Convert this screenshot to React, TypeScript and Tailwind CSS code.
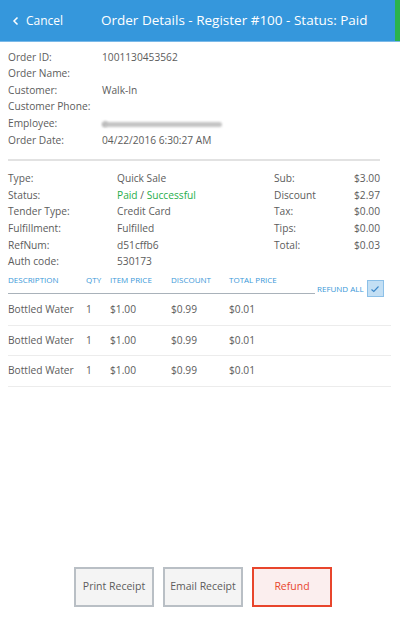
import React from "react";

const infoRows: [string, string][] = [
  ["Order ID:", "1001130453562"],
  ["Order Name:", ""],
  ["Customer:", "Walk-In"],
  ["Customer Phone:", ""],
  ["Employee:", "__BLUR__"],
  ["Order Date:", "04/22/2016 6:30:27 AM"],
];

const leftRows: [string, React.ReactNode][] = [
  ["Type:", "Quick Sale"],
  ["Status:", <span className="text-[#1fae4b]">Paid <span className="text-[#5c5c5c]">/</span> Successful</span>],
  ["Tender Type:", "Credit Card"],
  ["Fulfillment:", "Fulfilled"],
  ["RefNum:", "d51cffb6"],
  ["Auth code:", "530173"],
];

const rightRows: [string, string][] = [
  ["Sub:", "$3.00"],
  ["Discount", "$2.97"],
  ["Tax:", "$0.00"],
  ["Tips:", "$0.00"],
  ["Total:", "$0.03"],
];

export default function App() {
  return (
    <div
      className="w-[400px] min-h-[640px] bg-white flex flex-col text-[#5c5c5c] text-[10.2px]"
      style={{ fontFamily: '"Open Sans", "Noto Sans", sans-serif' }}
    >
      <div className="h-[42px] bg-[#3597dc] flex items-stretch border-b border-[#7ab9e8] shrink-0">
        <div className="flex items-center pl-[12px] w-[101px] text-white text-[12px]">
          <svg width="8" height="10" viewBox="0 0 8 10" className="mr-[6px]">
            <path d="M5.5 1.5 L2 5 L5.5 8.5" fill="none" stroke="white" strokeWidth="1.5" />
          </svg>
          <span>Cancel</span>
        </div>
        <div className="flex-1 flex items-center text-white text-[13.5px]">
          Order Details - Register #100 - Status: Paid
        </div>
        <div className="w-[5px] bg-[#2bb24c]" />
      </div>

      <div className="px-[8px] pt-[7px]">
        <div className="flex flex-col">
          {infoRows.map(([l, v]) => (
            <div key={l} className="flex h-[16.6px] items-center">
              <div className="w-[94px]">{l}</div>
              <div>
                {v === "__BLUR__" ? (
                  <div className="relative w-[120px] h-[10px]">
                    <div className="absolute left-0 top-[3px] w-[120px] h-[5px] bg-[#c4c4c4] rounded-full blur-[0.8px]" />
                    <span className="absolute left-0 top-[-3px] text-[#aaa] blur-[1px]">e</span>
                  </div>
                ) : (
                  v
                )}
              </div>
            </div>
          ))}
        </div>

        <div className="mt-[10px] mr-[12px] h-[2px] bg-[#e2e2e2]" />

        <div className="flex mt-[10px] mr-[12px]">
          <div className="flex flex-col flex-1">
            {leftRows.map(([l, v]) => (
              <div key={l} className="flex h-[16.6px] items-center">
                <div className="w-[109px]">{l}</div>
                <div>{v}</div>
              </div>
            ))}
          </div>
          <div className="flex flex-col w-[106px]">
            {rightRows.map(([l, v]) => (
              <div key={l} className="flex h-[16.6px] items-center justify-between">
                <div>{l}</div>
                <div>{v}</div>
              </div>
            ))}
          </div>
        </div>

        <div className="flex items-end mt-[4px]">
          <div className="w-[307px] border-b border-[#a9b2ba] pb-[7px] flex text-[8px] text-[#3a98d8] uppercase">
            <div className="w-[78px]">Description</div>
            <div className="w-[24px]">Qty</div>
            <div className="w-[61px]">Item Price</div>
            <div className="w-[58px]">Discount</div>
            <div>Total Price</div>
          </div>
          <div className="flex items-center ml-[2px] mb-[-3px]">
            <span className="text-[8px] text-[#3a98d8] uppercase">Refund All</span>
            <div className="ml-[3px] w-[17px] h-[17px] bg-[#c3dff4] border border-[#8cc0e8] flex items-center justify-center">
              <svg width="10" height="8" viewBox="0 0 10 8">
                <path d="M1.5 4.5 L3.8 6.5 L8.5 1.5" fill="none" stroke="#3a86c8" strokeWidth="1.1" />
              </svg>
            </div>
          </div>
        </div>

        <div className="mt-[1px]">
          {[0, 1, 2].map((i) => (
            <div key={i} className="flex items-center h-[30.6px] border-b border-[#ececec] mr-[1px]">
              <div className="w-[78px]">Bottled Water</div>
              <div className="w-[24px]">1</div>
              <div className="w-[61px]">$1.00</div>
              <div className="w-[58px]">$0.99</div>
              <div>$0.01</div>
            </div>
          ))}
        </div>
      </div>

      <div className="flex-1" />

      <div className="flex justify-center gap-[9px] pb-[33px] pl-[6px]">
        <button className="w-[80px] h-[40px] bg-[#f4f4f4] border-2 border-[#b9bfc5] text-[#5c5c5c] text-[10.5px]">
          Print Receipt
        </button>
        <button className="w-[80px] h-[40px] bg-[#f4f4f4] border-2 border-[#b9bfc5] text-[#5c5c5c] text-[10.5px]">
          Email Receipt
        </button>
        <button className="w-[80px] h-[40px] bg-[#fbeeee] border-2 border-[#e8452c] text-[#e8452c] text-[10.5px]">
          Refund
        </button>
      </div>
    </div>
  );
}
